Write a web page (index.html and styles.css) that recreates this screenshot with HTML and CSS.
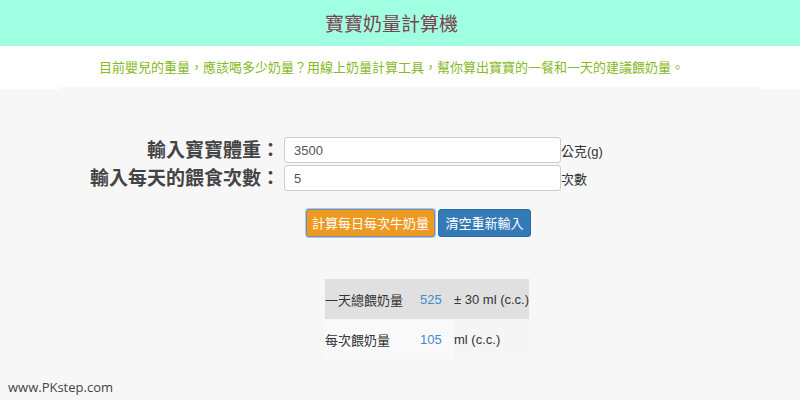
FILE: index.html
```html
<!DOCTYPE html>
<html>
  <head>
    <meta charset="UTF-8" />
    <title>寶寶奶量計算機</title>
    <link rel="stylesheet" href="styles.css">
  </head>
  <body>
    <header class="top">
      <h1 class="title">寶寶奶量計算機</h1>
    </header>
    <div class="intro">
      <p>目前嬰兒的重量，應該喝多少奶量？用線上奶量計算工具，幫你算出寶寶的一餐和一天的建議餵奶量。</p>
    </div>
    <main class="con">
      <div class="form">
        <label class="label" for="weight">輸入寶寶體重：</label>
        <input class="field" id="weight" type="text" value="3500" />
        <span class="unit">公克(g)</span>

        <label class="label" for="times">輸入每天的餵食次數：</label>
        <input class="field" id="times" type="text" value="5" />
        <span class="unit">次數</span>
      </div>

      <div class="buttons">
        <button class="btn btn-calc">計算每日每次牛奶量</button>
        <button class="btn btn-clear">清空重新輸入</button>
      </div>

      <table class="result">
        <tr class="row-a">
          <td class="c1">一天總餵奶量</td>
          <td class="c2">525</td>
          <td class="c3">± 30 ml (c.c.)</td>
        </tr>
        <tr class="row-b">
          <td class="c1">每次餵奶量</td>
          <td class="c2">105</td>
          <td class="c3">ml (c.c.)</td>
        </tr>
      </table>
    </main>
    <div class="mark">www.PKstep.com</div>
  </body>
</html>
```

FILE: styles.css
```css
body {
  margin: 0;
  height: 400px;
  background-color: #f7f7f7;
  font-family: "Liberation Sans", "Noto Sans CJK TC", sans-serif;
  color: #333;
  position: relative;
  overflow: hidden;
}

.top {
  height: 46px;
  background-color: #a0ffe0;
  display: flex;
  align-items: center;
  justify-content: center;
  padding-right: 17px;
}
.title {
  margin: 0;
  font-family: "Noto Sans CJK TC", sans-serif;
  font-weight: normal;
  font-size: 19px;
  line-height: 22px;
  color: #7b4250;
}

.intro {
  height: 43px;
  background-color: white;
  display: flex;
  align-items: center;
  justify-content: center;
  padding-right: 17px;
}
.intro p {
  margin: 0 0 2px 0;
  font-family: "Noto Sans CJK TC", sans-serif;
  font-size: 13px;
  line-height: 16px;
  color: #86b923;
}

.con {
  width: 700px;
  margin: -2px 0 0 60px;
  background-color: #f7f7f7;
  padding-top: 50px;
}

.form {
  display: grid;
  grid-template-columns: 217px 277px auto;
  column-gap: 7px;
  row-gap: 2px;
  align-items: center;
}
.label {
  text-align: right;
  font-family: "Noto Sans CJK TC", sans-serif;
  font-weight: bold;
  font-size: 19px;
  line-height: 24px;
  color: #444;
  margin-top: -2px;
  margin-right: -3px;
}
.field {
  box-sizing: border-box;
  width: 277px;
  height: 26px;
  margin: 0;
  padding: 0 9px;
  border: 1px solid #ccc;
  border-radius: 3px;
  background-color: white;
  font-family: "Liberation Sans", sans-serif;
  font-size: 13px;
  color: #555;
}
.unit {
  margin-left: -7px;
  font-size: 13px;
  color: #333;
}

.buttons {
  display: flex;
  gap: 3px;
  padding-left: 246px;
  margin-top: 18px;
}
.btn {
  height: 28px;
  padding: 0;
  border-radius: 3px;
  font-family: "Noto Sans CJK TC", sans-serif;
  font-size: 13px;
  line-height: 16px;
  white-space: nowrap;
  color: white;
  border: 1px solid transparent;
}
.btn-calc {
  width: 129px;
  background-color: #ec9a22;
  border-color: #7d8ba3;
  box-shadow: 0 0 0 1px #a9c9ef;
}
.btn-clear {
  width: 93px;
  background-color: #337ab7;
  border-color: #2e6da4;
}

.result {
  margin: 42px 0 0 265px;
  border-collapse: collapse;
  font-size: 13px;
}
.result td {
  height: 40px;
  padding: 0;
  white-space: nowrap;
}
.c1 {
  width: 95px;
  font-family: "Noto Sans CJK TC", sans-serif;
  color: #333;
}
.c2 {
  width: 34px;
  color: #3f8ad0;
}
.c3 {
  width: 74px;
  color: #333;
}
.row-a td {
  background-color: #e0e0e0;
}
.row-b td {
  background-color: #f9f9f9;
}
.row-b .c3 {
  background-color: #f5f5f5;
}

.mark {
  position: absolute;
  left: 8px;
  bottom: 4px;
  font-family: "Open Sans", sans-serif;
  font-size: 13px;
  color: #444;
}
```
